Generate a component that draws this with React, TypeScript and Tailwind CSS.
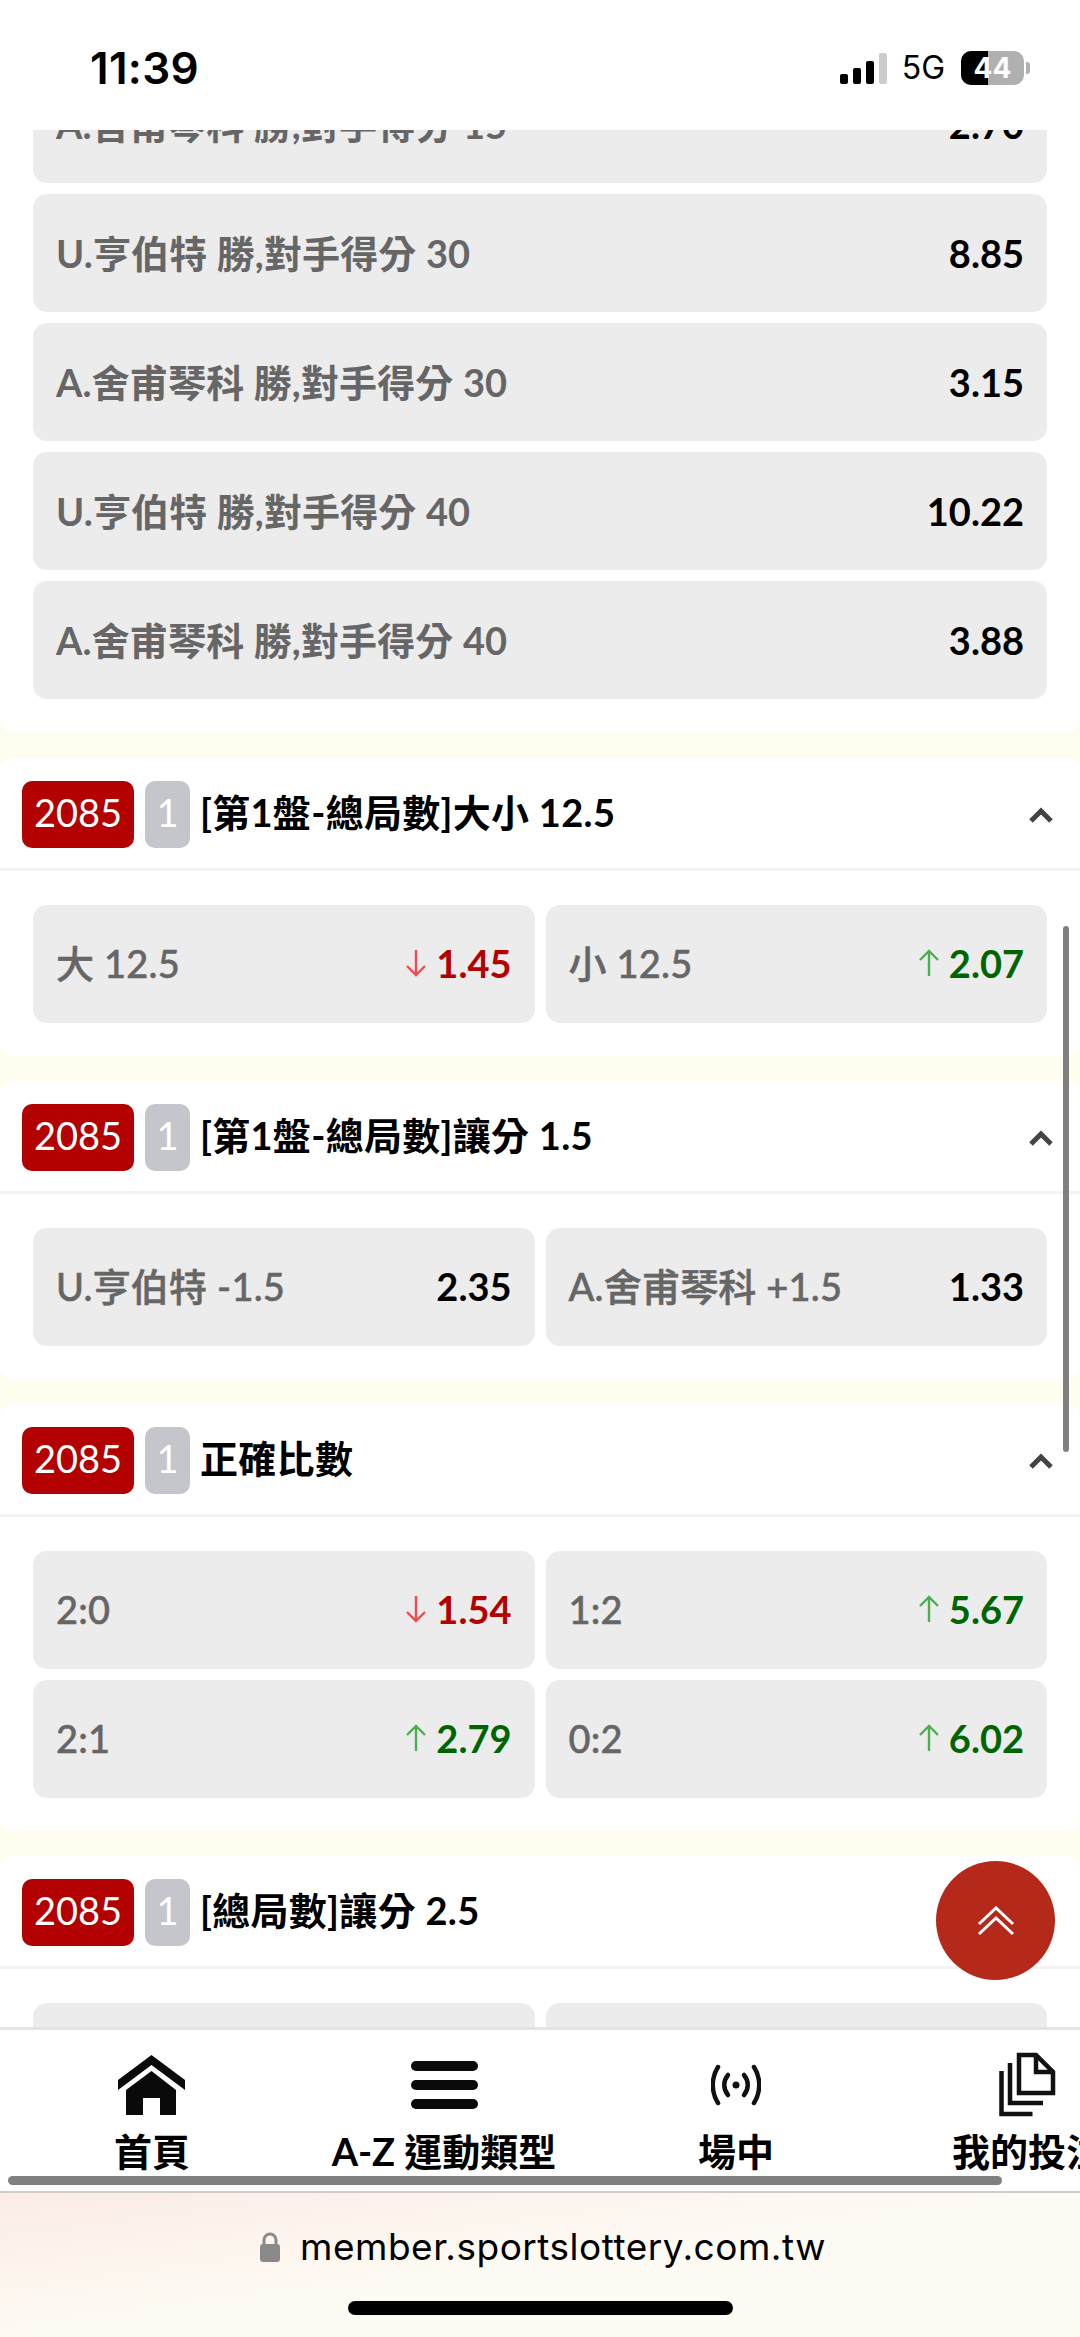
import React from 'react';

type Trend = 'up' | 'down' | null;

interface Odd {
  label: string;
  value: string;
  trend?: Trend;
}

interface Market {
  badge: string;
  title: string;
  rows: Odd[][];
}

const topRows: Odd[] = [
  { label: 'A.舍甫琴科 勝,對手得分 15', value: '2.70' },
  { label: 'U.亨伯特 勝,對手得分 30', value: '8.85' },
  { label: 'A.舍甫琴科 勝,對手得分 30', value: '3.15' },
  { label: 'U.亨伯特 勝,對手得分 40', value: '10.22' },
  { label: 'A.舍甫琴科 勝,對手得分 40', value: '3.88' },
];

const markets: Market[] = [
  {
    badge: '1',
    title: '[第1盤-總局數]大小 12.5',
    rows: [
      [
        { label: '大 12.5', value: '1.45', trend: 'down' },
        { label: '小 12.5', value: '2.07', trend: 'up' },
      ],
    ],
  },
  {
    badge: '1',
    title: '[第1盤-總局數]讓分 1.5',
    rows: [
      [
        { label: 'U.亨伯特 -1.5', value: '2.35' },
        { label: 'A.舍甫琴科 +1.5', value: '1.33' },
      ],
    ],
  },
  {
    badge: '1',
    title: '正確比數',
    rows: [
      [
        { label: '2:0', value: '1.54', trend: 'down' },
        { label: '1:2', value: '5.67', trend: 'up' },
      ],
      [
        { label: '2:1', value: '2.79', trend: 'up' },
        { label: '0:2', value: '6.02', trend: 'up' },
      ],
    ],
  },
  {
    badge: '1',
    title: '[總局數]讓分 2.5',
    rows: [
      [
        { label: '', value: '' },
        { label: '', value: '' },
      ],
    ],
  },
];

const TrendArrow = ({ trend }: { trend: 'up' | 'down' }) => (
  <svg width="20" height="28" viewBox="0 0 20 28" fill="none" className="mr-[10px]">
    {trend === 'up' ? (
      <path d="M10 27V2M1 11l9-9 9 9" stroke="#4caf50" strokeWidth="2.4" />
    ) : (
      <path d="M10 1v25M1 17l9 9 9-9" stroke="#f44850" strokeWidth="2.4" />
    )}
  </svg>
);

const OddCell = ({ odd, wide }: { odd: Odd; wide?: boolean }) => {
  const valueColor =
    odd.trend === 'up' ? 'text-[#006400]' : odd.trend === 'down' ? 'text-[#b30000]' : 'text-black';
  return (
    <div className={`h-[118px] flex items-center justify-between bg-[#ececec] rounded-[14px] pl-[23px] pr-[23px] ${wide ? 'w-full' : 'flex-1 min-w-0 pb-[2px]'}`}>
      <span className={`text-[38px] text-[#666666] whitespace-nowrap ${wide ? 'font-bold tracking-[0.15px]' : 'font-medium tracking-[0.2px] [-webkit-text-stroke:0.5px_#666666]'}`}>{odd.label}</span>
      <span className="flex items-center">
        {odd.trend && <TrendArrow trend={odd.trend} />}
        <span className={`text-[38px] font-bold ${valueColor}`}>{odd.value}</span>
      </span>
    </div>
  );
};

const MarketSection = ({ market }: { market: Market }) => (
  <section className="bg-white rounded-[14px]">
    <div className="h-[113px] flex items-center pt-[3px] pl-[22px] pr-[26px] border-b-[3px] border-[#f3f3f8]">
      <span className="w-[112px] h-[67px] pb-[4px] flex items-center justify-center bg-[#b30000] text-white text-[38px] rounded-[10px]">2085</span>
      <span className="w-[45px] h-[67px] pb-[4px] ml-[11px] flex items-center justify-center bg-[#c5c5cc] text-white text-[38px] rounded-[10px]">{market.badge}</span>
      <span className="ml-[10px] pb-[5px] text-[38px] font-bold tracking-[0.3px] text-black flex-1 whitespace-nowrap">{market.title}</span>
      <svg width="26" height="16" viewBox="0 0 26 16" fill="none">
        <path d="M3 14L13 4l10 10" stroke="#444444" strokeWidth="5" />
      </svg>
    </div>
    <div className="flex flex-col gap-[11px] pt-[34px] pb-[33px] px-[33px]">
      {market.rows.map((row, i) => (
        <div key={i} className="flex gap-[11px]">
          {row.map((odd, j) => (
            <OddCell key={j} odd={odd} />
          ))}
        </div>
      ))}
    </div>
  </section>
);

const HomeIcon = () => (
  <svg width="68" height="61" viewBox="0 0 68 61" fill="#0a0a0a">
    <path d="M33.5 0L67 25v10L33.5 10 0 35V25z" />
    <path d="M33.5 16L58 35v25H42V43H25v17H8V35z" />
  </svg>
);

const MenuIcon = () => (
  <svg width="67" height="49" viewBox="0 0 67 49" fill="#0a0a0a">
    <rect x="0" y="0" width="67" height="10" rx="5" />
    <rect x="0" y="19" width="67" height="10" rx="5" />
    <rect x="0" y="38" width="67" height="10" rx="5" />
  </svg>
);

const LiveIcon = () => (
  <svg width="50" height="42" viewBox="0 0 50 42" fill="none" stroke="#111111" strokeWidth="4.500" strokeLinecap="round">
    <path d="M7 3C0 14 0 28 7 39" />
    <path d="M43 3c7 11 7 25 0 36" />
    <path d="M17 11c-5 6-5 14 0 20" />
    <path d="M33 11c5 6 5 14 0 20" />
    <circle cx="25" cy="21" r="3.500" fill="#111111" stroke="none" />
  </svg>
);

const BetsIcon = () => (
  <svg width="60" height="66" viewBox="0 0 60 66" fill="none" stroke="#111111" strokeWidth="4.500">
    <path d="M21 3h17l17 17v21H21z" />
    <path d="M38 3v17h17" />
    <path d="M12 11v40h33" />
    <path d="M3.500 19v43h31" />
  </svg>
);

const navItems = [
  { label: '首頁', icon: <HomeIcon /> },
  { label: 'A-Z 運動類型', icon: <MenuIcon /> },
  { label: '場中', icon: <LiveIcon /> },
  { label: '我的投注', icon: <BetsIcon /> },
];

export default function App() {
  return (
    <div className="w-[1080px] h-[2337px] overflow-hidden flex flex-col bg-white font-['Lato','Noto_Sans_CJK_TC',sans-serif]">
      {/* status bar */}
      <div className="h-[130px] shrink-0 flex items-center justify-between pt-[6px] pl-[90px] pr-[50px] bg-white font-['Inter','Noto_Sans_CJK_TC',sans-serif]">
        <span className="text-[44px] font-semibold tracking-[0.3px] text-black">11:39</span>
        <div className="flex items-center">
          <div className="flex items-end gap-[5px] h-[31px]">
            <span className="w-[8px] h-[10px] rounded-[2px] bg-black" />
            <span className="w-[8px] h-[16px] rounded-[2px] bg-black" />
            <span className="w-[8px] h-[23px] rounded-[2px] bg-black" />
            <span className="w-[8px] h-[31px] rounded-[2px] bg-[#cccccc]" />
          </div>
          <span className="ml-[15px] text-[32px] font-normal text-black">5G</span>
          <div className="ml-[16px] flex items-center">
            <div className="relative w-[63px] h-[34px] rounded-[10px] overflow-hidden flex bg-[#b0b0b0]">
              <span className="w-[27px] bg-black" />
              <span className="absolute inset-0 flex items-center justify-center text-white text-[28px] font-bold leading-none">44</span>
            </div>
            <span className="w-[4px] h-[12px] ml-[2px] rounded-r-[3px] bg-[#b0b0b0]" />
          </div>
        </div>
      </div>

      {/* scrolled content */}
      <main className="relative flex-1 min-h-0 overflow-hidden bg-[#fffdf0]">
        <div className="flex flex-col gap-[25px] -mt-[65px]">
          <section className="bg-white rounded-b-[14px] flex flex-col gap-[11px] pb-[34px] px-[33px]">
            {topRows.map((odd) => (
              <OddCell key={odd.label} odd={odd} wide />
            ))}
          </section>
          {markets.map((m) => (
            <MarketSection key={m.title} market={m} />
          ))}
        </div>
        <div className="absolute right-[11px] top-[796px] w-[6px] h-[526px] rounded-full bg-[#808080]" />
        <button type="button" className="absolute left-[936px] top-[1731px] w-[119px] h-[119px] rounded-full bg-[#b5291a] flex items-center justify-center">
          <svg width="38" height="30" viewBox="0 0 38 30" fill="none" stroke="#ffffff" strokeWidth="3">
            <path d="M2 18L19 2l17 16" />
            <path d="M2 28l17-16 17 16" />
          </svg>
        </button>
      </main>

      {/* bottom nav */}
      <nav className="relative h-[166px] shrink-0 border-t-[3px] border-b-[2px] border-t-[#e4e4e8] border-b-[#d0ccc8] bg-white overflow-hidden flex pl-[6px] pt-[22px]">
        {navItems.map((item) => (
          <div key={item.label} className="w-[292px] shrink-0 flex flex-col items-center">
            <div className="h-[66px] flex items-center justify-center">{item.icon}</div>
            <span className="mt-[13px] text-[38px] leading-[40px] font-bold text-black whitespace-nowrap">{item.label}</span>
          </div>
        ))}
        <div className="absolute left-[8px] top-[146px] w-[994px] h-[9px] rounded-full bg-[#808080]" />
      </nav>

      {/* browser bar */}
      <div className="h-[144px] shrink-0 flex flex-col items-center bg-linear-to-br from-[#fbece6] via-[#fdfbf3] to-[#fdfcf3] font-['Inter',sans-serif]">
        <div className="flex items-center mt-[32px] pl-[5px] h-[44px]">
          <svg width="22" height="30" viewBox="0 0 22 30" fill="none">
            <path d="M5 14V8a6 6 0 0 1 12 0v6" stroke="#8a8a8a" strokeWidth="3" />
            <rect x="1" y="12" width="20" height="18" rx="3" fill="#8a8a8a" />
          </svg>
          <span className="ml-[19px] text-[37px] text-black tracking-[0.5px]">member.sportslottery.com.tw</span>
        </div>
        <div className="mt-[32px] w-[385px] h-[14px] rounded-full bg-black" />
      </div>
    </div>
  );
}
